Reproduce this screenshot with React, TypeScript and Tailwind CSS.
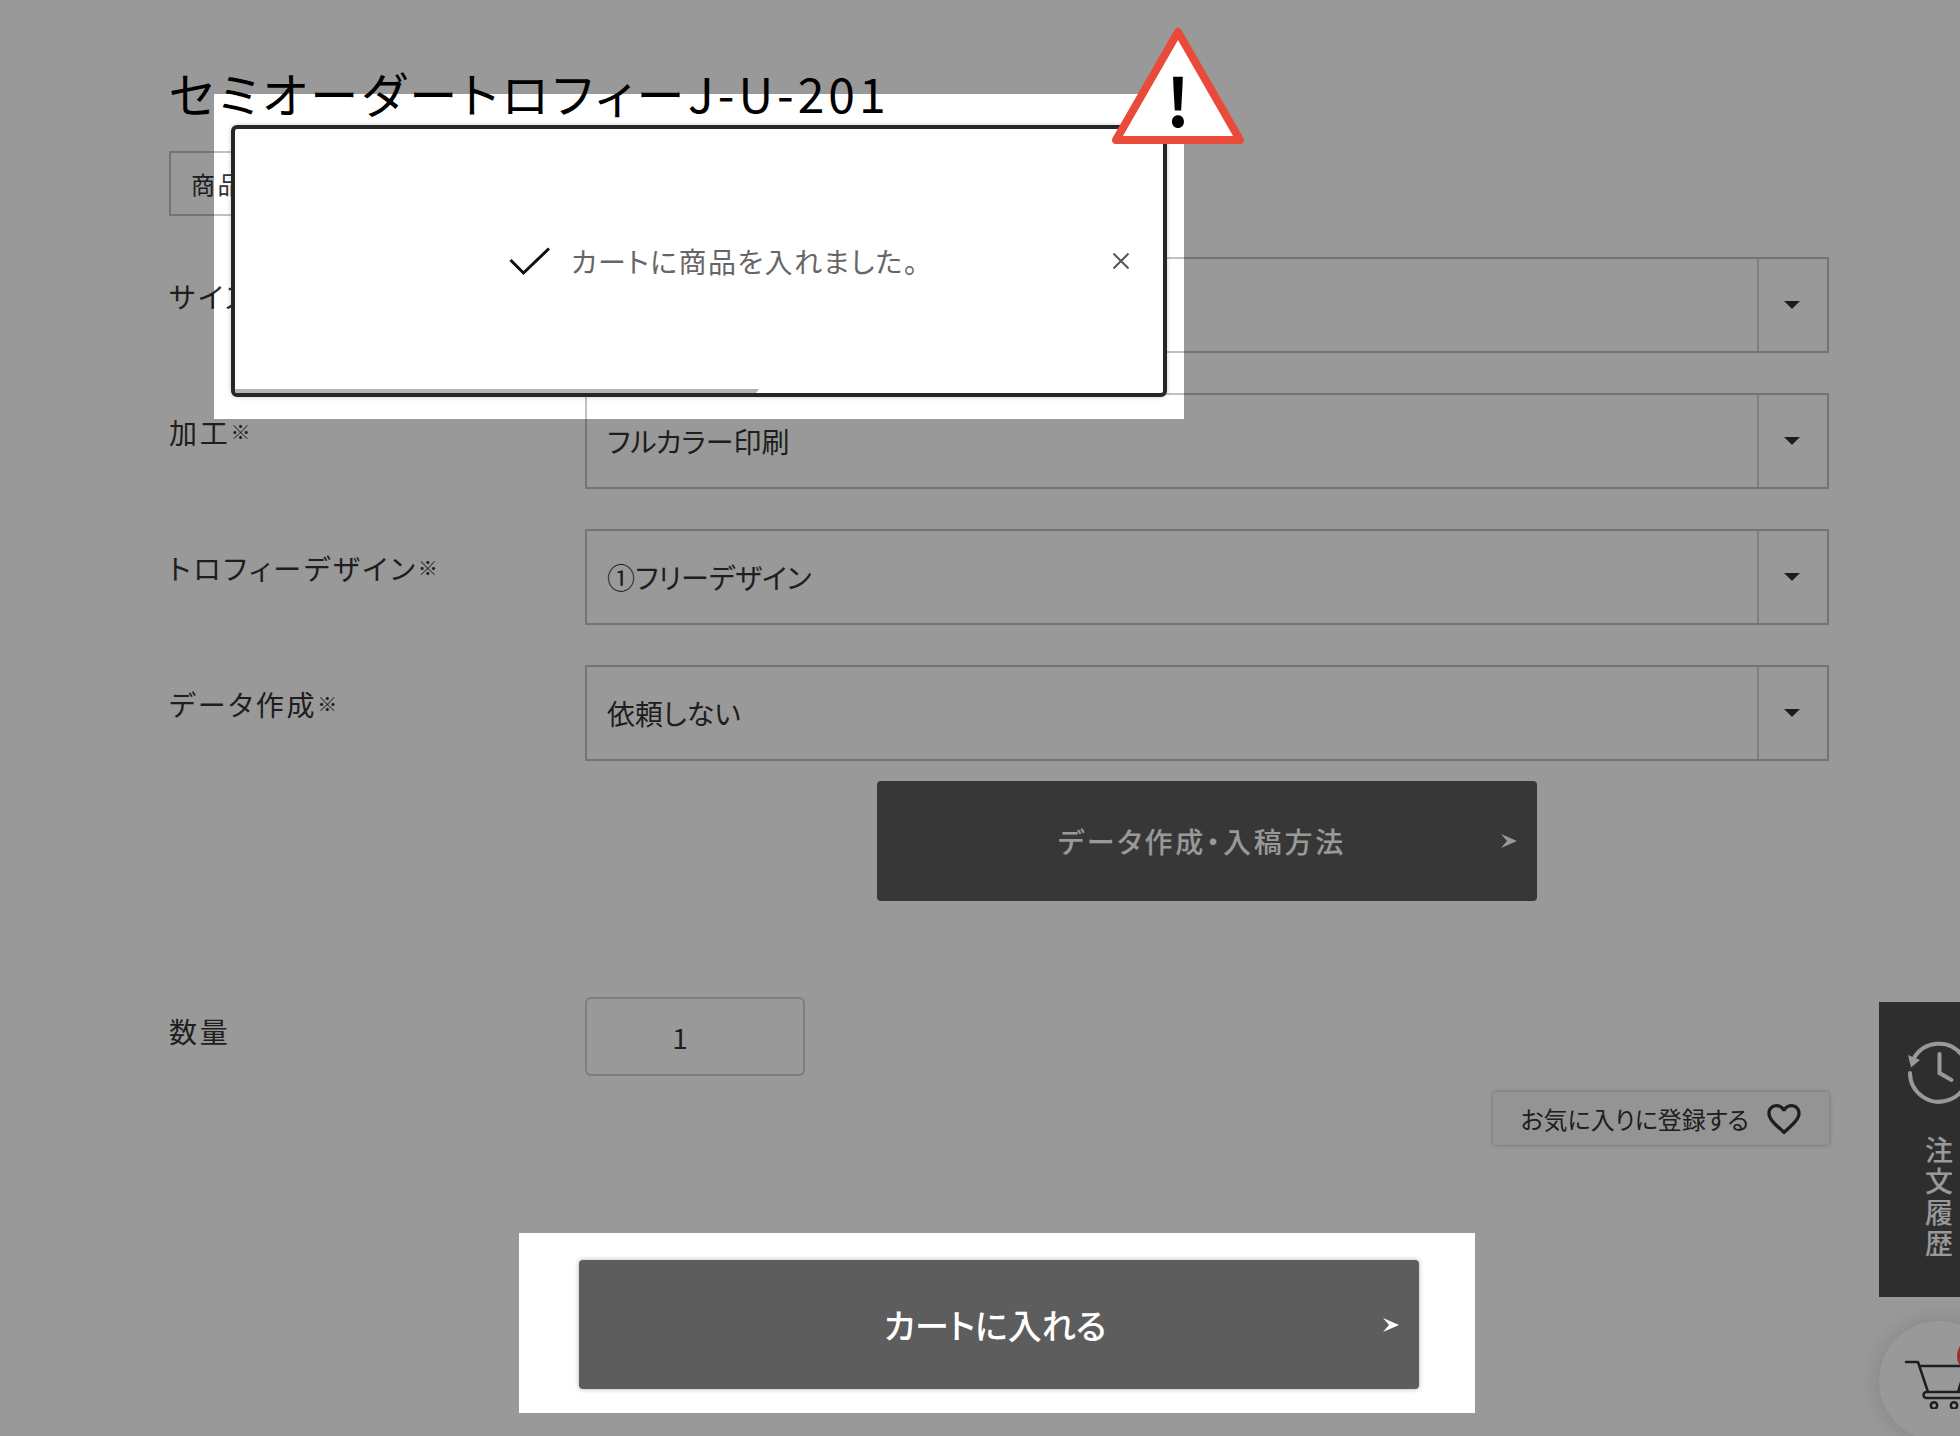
import { useId } from "react";
import type { ReactNode } from "react";
import { MdFavoriteBorder } from "react-icons/md";

function Label({ htmlFor, required, children }: { htmlFor: string; required?: boolean; children: ReactNode }) {
  return (
    <label htmlFor={htmlFor} className="flex h-[78px] w-[416px] shrink-0 items-center text-[28px] leading-10 tracking-widest">
      {children}
      {required && <span className="text-xl leading-10">※</span>}
    </label>
  );
}

function SelectRow({ label, options }: { label: string; options: string[] }) {
  const id = useId();
  return (
    <div className="flex">
      <Label htmlFor={id} required>{label}</Label>
      <div className="relative flex h-24 flex-1">
        <select id={id} className="w-full appearance-none border-2 border-[#c1c1c1] bg-transparent pr-20 pl-5 text-[28px] outline-none">
          {options.map((o) => (
            <option key={o}>{o}</option>
          ))}
        </select>
        <span className="pointer-events-none absolute inset-y-0.5 right-0.5 flex w-[70px] items-center justify-center border-l-2 border-[#d3d3d3] pr-0.5">
          <svg width="16" height="8" viewBox="0 0 16 8" aria-hidden="true">
            <path d="M0 0h16L8 8z" fill="#333" />
          </svg>
        </span>
      </div>
    </div>
  );
}

function Arrow() {
  return (
    <svg width="16" height="14" viewBox="0 0 16 14" fill="currentColor" aria-hidden="true">
      <path d="M0 0 16 7 0 14 6 7z" />
    </svg>
  );
}

function CartToast() {
  return (
    <div className="absolute top-[94px] left-[214px] h-[325px] w-[970px] px-[17px] pt-[31px] pb-[22px] shadow-[0_0_0_3000px_rgba(0,0,0,0.4)]">
      <div role="status" className="relative flex h-full items-center justify-center overflow-hidden rounded-md border-4 border-[#262626] bg-white pl-[30px] shadow-[0_0_5px_rgba(0,0,0,0.2)]">
        <svg width="42" height="29" viewBox="0 0 42 29" fill="none" aria-hidden="true">
          <path d="M1.500 13 14.500 26 40 1.500" stroke="#111" strokeWidth="3" />
        </svg>
        <p className="pl-5 text-[28px] tracking-wider text-[#666]">カートに商品を入れました。</p>
        <button type="button" aria-label="閉じる" className="absolute top-1/2 right-[34px] -translate-y-1/2">
          <svg width="16" height="16" viewBox="0 0 16 16" stroke="#555" strokeWidth="2" aria-hidden="true">
            <path d="M0.500 0.500l15 15M15.500 0.500l-15 15" />
          </svg>
        </button>
        <div className="absolute bottom-0 left-0 h-1 w-[524px] bg-[#b3b3b3] [clip-path:polygon(0_0,100%_0,calc(100%-3px)_100%,0_100%)]" />
      </div>
      <svg className="absolute -top-[67px] right-[-61px]" width="134" height="118" viewBox="0 0 134 118" role="img" aria-label="注意">
        <path d="M67 5 129 113H5z" fill="#fff" stroke="#ea4a3a" strokeWidth="8" strokeLinejoin="round" />
        <text x="67" y="100" textAnchor="middle" fontSize="66" fontWeight="700" fill="#000" fontFamily="'Noto Sans CJK JP', sans-serif">!</text>
      </svg>
    </div>
  );
}

export default function App() {
  return (
    <div className="relative min-h-screen overflow-hidden bg-white font-['Noto_Sans_CJK_JP',sans-serif] text-[#333] [font-feature-settings:'palt']">
      <main className="pt-[57px] pr-[131px] pl-[169px]">
        <h1 className="text-5xl leading-[70px] tracking-[4px] text-black">セミオーダートロフィーJ-U-201</h1>
        <p className="mt-6 flex h-[65px] w-fit items-center border-2 border-[#c1c1c1] px-5 text-2xl tracking-widest">商品番号</p>
        <form className="mt-[41px]" onSubmit={(e) => e.preventDefault()}>
          <div className="flex flex-col gap-10">
            <SelectRow label="サイズ" options={[""]} />
            <SelectRow label="加工" options={["フルカラー印刷"]} />
            <SelectRow label="トロフィーデザイン" options={["①フリーデザイン"]} />
            <SelectRow label="データ作成" options={["依頼しない"]} />
          </div>
          <div className="mt-5 ml-[416px] flex justify-center">
            <a href="#data" className="relative flex h-[120px] w-[660px] items-center justify-center rounded bg-[#5d5d5d] pr-2.5 text-[28px] font-medium tracking-widest text-white">
              データ作成・入稿方法
              <span className="absolute right-5"><Arrow /></span>
            </a>
          </div>
          <div className="mt-24 flex items-center">
            <div className="-mt-3">
              <Label htmlFor="quantity">数量</Label>
            </div>
            <input id="quantity" type="text" inputMode="numeric" defaultValue="1" className="h-[79px] w-[220px] rounded-md border-2 border-[#d0d0d0] bg-transparent pr-[30px] text-center text-[28px] outline-none" />
          </div>
          <div className="mt-4 flex justify-end">
            <button type="button" className="flex h-[53px] items-center gap-[15px] rounded-xs bg-[#f7f7f7] pr-[25px] pl-7 text-2xl shadow-[0_0_4px_rgba(0,0,0,0.3)]">
              お気に入りに登録する
              <MdFavoriteBorder size={40} />
            </button>
          </div>
          <div className="mt-[88px] flex justify-center pr-1">
            <div className="relative z-10 w-[956px] bg-white pt-[27px] pr-[56px] pb-6 pl-[60px]">
              <button type="submit" className="relative flex h-[129px] w-full items-center justify-center rounded bg-[#5d5d5d] pr-2 text-[34px] font-medium text-white shadow-[0_0_5px_rgba(0,0,0,0.3)]">
                カートに入れる
                <span className="absolute right-5"><Arrow /></span>
              </button>
            </div>
          </div>
        </form>
      </main>

      <aside className="absolute top-[1002px] right-[-39px] flex w-[120px] flex-col items-center gap-6">
        <a href="#history" className="flex h-[295px] w-full flex-col items-center bg-[#4d4d4d] pt-[38px] text-white">
          <svg width="66" height="66" viewBox="0 0 66 66" fill="none" stroke="currentColor" strokeWidth="4" strokeLinecap="round" aria-hidden="true">
            <path d="M4 33A29 29 0 1 0 8 18" />
            <path d="M33.500 14v19l12 7" />
            <path d="M2 15l12 5-9 7.500z" fill="currentColor" stroke="none" />
          </svg>
          <span className="mt-[30px] text-[28px] leading-8 font-medium tracking-[3px] [writing-mode:vertical-rl]">注文履歴</span>
        </a>
        <a href="#cart" aria-label="カート" className="relative flex size-[120px] items-center justify-center rounded-full bg-white shadow-[0_0_24px_rgba(0,0,0,0.15)]">
          <svg width="70" height="56" viewBox="0 0 70 56" fill="none" stroke="#333" strokeWidth="2.500" strokeLinecap="round" strokeLinejoin="round" aria-hidden="true">
            <path d="M2 9h12l10 30M15.500 13H62l-8 26M58 39H22.500a3 3 0 0 0 0 6H58" />
            <circle cx="30" cy="52.500" r="3.200" />
            <circle cx="50" cy="52.500" r="3.200" />
          </svg>
          <span className="absolute top-[17px] left-[78px] size-9 rounded-full bg-[#ff5050]" />
        </a>
      </aside>

      <CartToast />
    </div>
  );
}
